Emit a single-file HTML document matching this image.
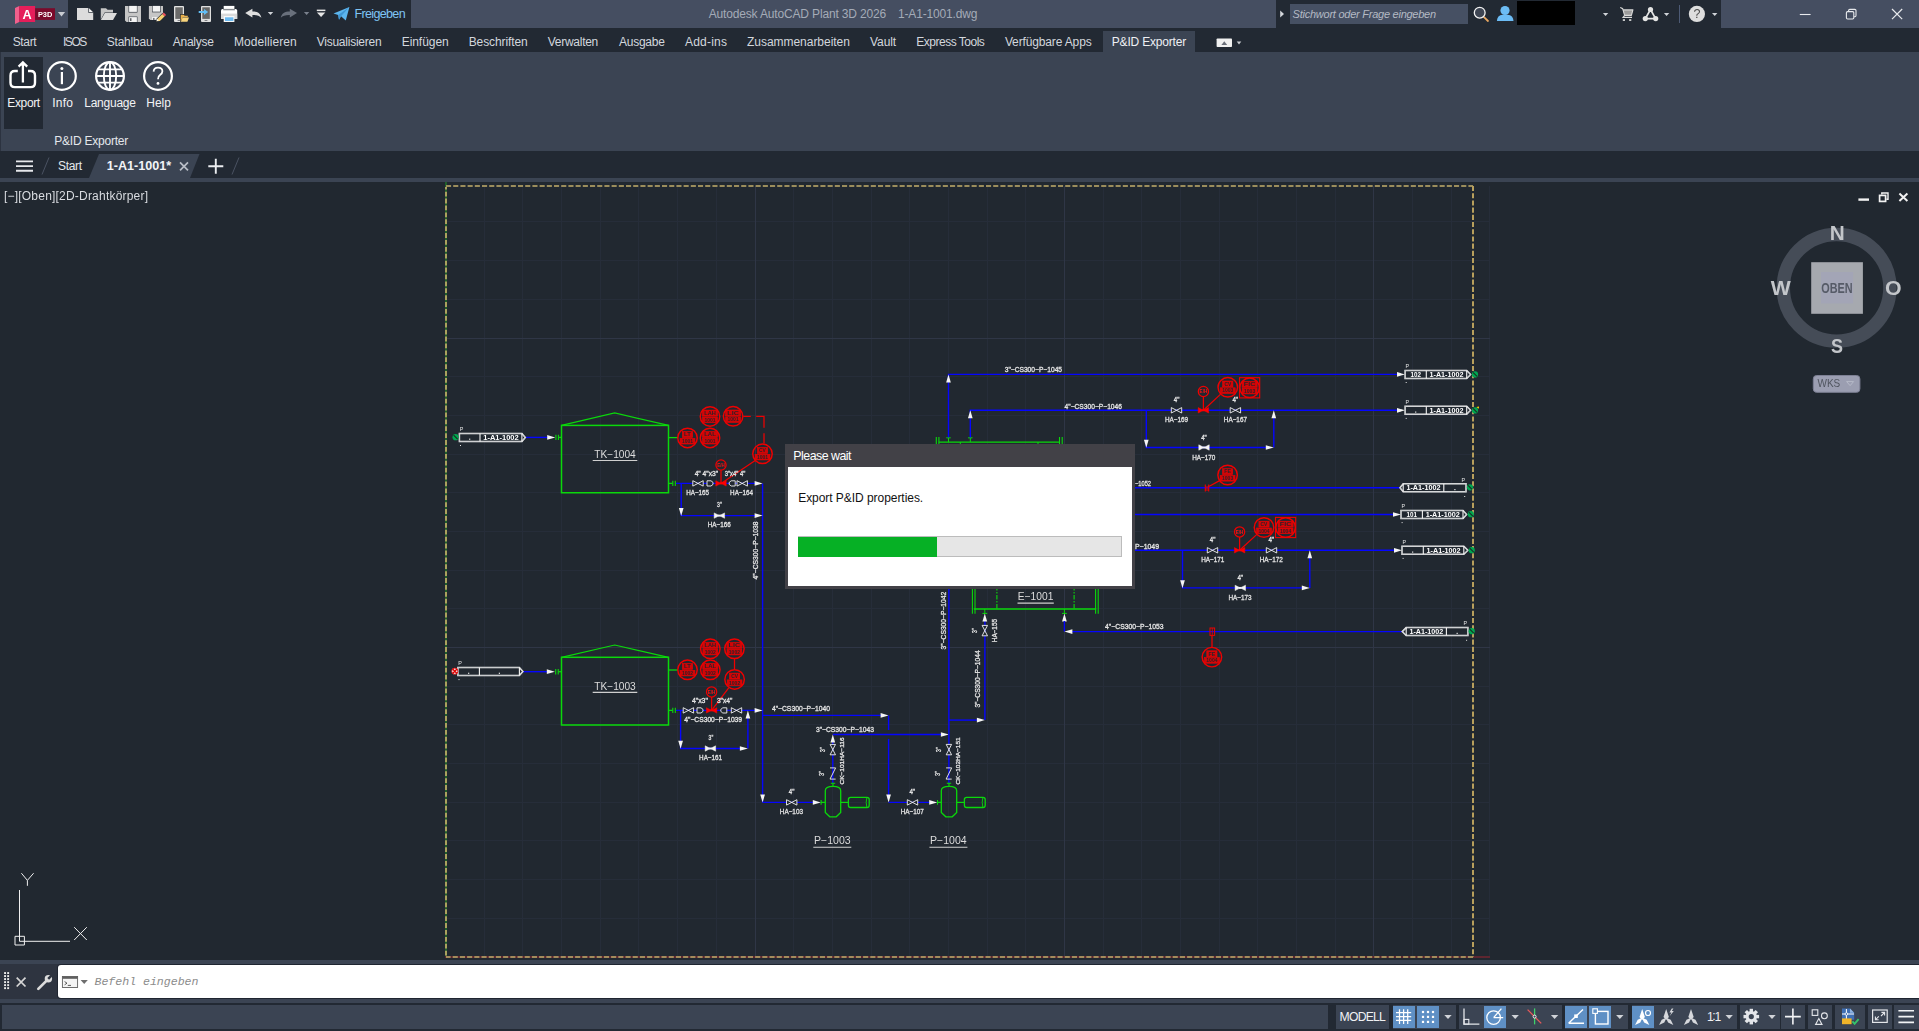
<!DOCTYPE html>
<html lang="de"><head><meta charset="utf-8"><title>Autodesk AutoCAD Plant 3D 2026 - 1-A1-1001.dwg</title>
<style>
html,body{margin:0;padding:0;background:#212830;overflow:hidden;}
body{width:1919px;height:1031px;position:relative;font-family:"Liberation Sans",sans-serif;}
.b{position:absolute;display:block;}
.t{position:absolute;white-space:pre;display:block;}
svg{overflow:visible;}
svg text{font-family:"Liberation Sans",sans-serif;}
</style></head>
<body>
<div class="b" style="left:0px;top:0px;width:1919px;height:28px;background:#454e61;"></div>
<div class="b" style="left:68px;top:0px;width:343px;height:28px;background:#222933;"></div>
<div class="b" style="left:1276px;top:0px;width:445px;height:28px;background:#222933;"></div>
<span class="t" style="left:708.70px;top:8.04px;font-size:12px;line-height:12px;color:#a4abb7;letter-spacing:-0.159px;">Autodesk AutoCAD Plant 3D 2026</span>
<span class="t" style="left:898.00px;top:8.04px;font-size:12px;line-height:12px;color:#a4abb7;letter-spacing:-0.158px;">1-A1-1001.dwg</span>
<span class="t" style="left:354.60px;top:7.82px;font-size:12.5px;line-height:12.5px;color:#7fc4f4;letter-spacing:-0.661px;">Freigeben</span>
<div class="b" style="left:1290px;top:4px;width:178px;height:20px;background:#465063;"></div>
<span class="t" style="left:1292.60px;top:8.69px;font-size:11px;line-height:11px;color:#b4bac4;font-style:italic;letter-spacing:-0.247px;">Stichwort oder Frage eingeben</span>
<div class="b" style="left:1516.5px;top:1px;width:58.5px;height:24px;background:#000;"></div>
<div class="b" style="left:1679px;top:5px;width:1px;height:18px;background:#4d5a75;"></div>
<div class="b" style="left:0px;top:28px;width:1919px;height:24px;background:#222933;"></div>
<div class="b" style="left:1102.7px;top:31px;width:92.6px;height:21px;background:#3b4453;"></div>
<span class="t" style="left:12.70px;top:36.04px;font-size:12px;line-height:12px;color:#d3d7dd;letter-spacing:-0.336px;">Start</span>
<span class="t" style="left:63.00px;top:36.04px;font-size:12px;line-height:12px;color:#d3d7dd;letter-spacing:-1.459px;">ISOS</span>
<span class="t" style="left:106.70px;top:36.04px;font-size:12px;line-height:12px;color:#d3d7dd;letter-spacing:-0.196px;">Stahlbau</span>
<span class="t" style="left:172.70px;top:36.04px;font-size:12px;line-height:12px;color:#d3d7dd;letter-spacing:-0.232px;">Analyse</span>
<span class="t" style="left:234.00px;top:36.04px;font-size:12px;line-height:12px;color:#d3d7dd;letter-spacing:0.066px;">Modellieren</span>
<span class="t" style="left:316.70px;top:36.04px;font-size:12px;line-height:12px;color:#d3d7dd;letter-spacing:-0.235px;">Visualisieren</span>
<span class="t" style="left:401.70px;top:36.04px;font-size:12px;line-height:12px;color:#d3d7dd;letter-spacing:-0.054px;">Einfügen</span>
<span class="t" style="left:468.70px;top:36.04px;font-size:12px;line-height:12px;color:#d3d7dd;letter-spacing:-0.103px;">Beschriften</span>
<span class="t" style="left:547.70px;top:36.04px;font-size:12px;line-height:12px;color:#d3d7dd;letter-spacing:-0.263px;">Verwalten</span>
<span class="t" style="left:619.00px;top:36.04px;font-size:12px;line-height:12px;color:#d3d7dd;letter-spacing:-0.246px;">Ausgabe</span>
<span class="t" style="left:685.00px;top:36.04px;font-size:12px;line-height:12px;color:#d3d7dd;letter-spacing:0.218px;">Add-ins</span>
<span class="t" style="left:747.00px;top:36.04px;font-size:12px;line-height:12px;color:#d3d7dd;letter-spacing:-0.032px;">Zusammenarbeiten</span>
<span class="t" style="left:870.00px;top:36.04px;font-size:12px;line-height:12px;color:#d3d7dd;letter-spacing:-0.065px;">Vault</span>
<span class="t" style="left:916.30px;top:36.04px;font-size:12px;line-height:12px;color:#d3d7dd;letter-spacing:-0.498px;">Express Tools</span>
<span class="t" style="left:1004.90px;top:36.04px;font-size:12px;line-height:12px;color:#d3d7dd;letter-spacing:-0.138px;">Verfügbare Apps</span>
<span class="t" style="left:1111.80px;top:36.04px;font-size:12px;line-height:12px;color:#eef0f3;letter-spacing:-0.191px;">P&amp;ID Exporter</span>
<div class="b" style="left:0px;top:52px;width:1919px;height:99px;background:#3b4453;"></div>
<div class="b" style="left:0px;top:52px;width:1px;height:99px;background:#2c3340;"></div>
<div class="b" style="left:4px;top:57px;width:39px;height:72px;background:#222933;"></div>
<span class="t" style="left:7.30px;top:97.14px;font-size:12px;line-height:12px;color:#f2f3f5;letter-spacing:-0.357px;">Export</span>
<span class="t" style="left:52.20px;top:97.14px;font-size:12px;line-height:12px;color:#f2f3f5;letter-spacing:0.261px;">Info</span>
<span class="t" style="left:84.20px;top:97.14px;font-size:12px;line-height:12px;color:#f2f3f5;letter-spacing:-0.228px;">Language</span>
<span class="t" style="left:146.20px;top:97.14px;font-size:12px;line-height:12px;color:#f2f3f5;letter-spacing:0.040px;">Help</span>
<span class="t" style="left:54.30px;top:135.14px;font-size:12px;line-height:12px;color:#e4e7eb;letter-spacing:-0.225px;">P&amp;ID Exporter</span>
<div class="b" style="left:0px;top:151px;width:1919px;height:27px;background:#222933;"></div>
<div class="b" style="left:0px;top:178px;width:1919px;height:4px;background:#3b4453;"></div>
<svg class="b" style="left:0;top:151px" width="260" height="27"><polygon points="89,27 99,3 199.5,3 190,27" fill="#3b4453"/><path d="M42,23.5 L49,6.5 M232,23.5 L239,6.5" stroke="#4a5262" stroke-width="1" fill="none"/><path d="M16,10.4h17 M16,15.1h17 M16,19.8h17" stroke="#e6e8ec" stroke-width="1.9"/><path d="M180,11.4l8,8 M188,11.4l-8,8" stroke="#b9bec7" stroke-width="1.7"/><path d="M208.3,15.2h15 M215.8,7.7v15" stroke="#eceef1" stroke-width="1.9"/></svg>
<span class="t" style="left:58.00px;top:159.54px;font-size:12px;line-height:12px;color:#e4e7eb;letter-spacing:-0.336px;">Start</span>
<span class="t" style="left:106.70px;top:160.33px;font-size:12.6px;line-height:12.6px;color:#f2f4f7;font-weight:bold;letter-spacing:0.006px;">1-A1-1001*</span>
<div class="b" style="left:0px;top:182px;width:1919px;height:778px;background:#212830;"></div>
<span class="t" style="left:3.50px;top:189.84px;font-size:12px;line-height:12px;color:#d9dce1;letter-spacing:0.206px;will-change:transform;">[−][Oben][2D-Drahtkörper]</span>
<div class="b" style="left:0px;top:960px;width:1919px;height:4px;background:#3b4453;"></div>
<div class="b" style="left:0px;top:964px;width:1919px;height:35px;background:#2e3440;"></div>
<div class="b" style="left:57px;top:964px;width:1862px;height:35px;background:#1f2530;border-radius:4px 0 0 4px;"></div>
<div class="b" style="left:58px;top:965px;width:1861px;height:33.2px;background:#fff;border-radius:3px 0 0 3px;"></div>
<div class="b" style="left:0px;top:999px;width:1919px;height:4px;background:#3b4453;"></div>
<span class="t" style="left:94.50px;top:976.01px;font-size:11.6px;line-height:11.6px;color:#8b8b8b;font-family:'Liberation Mono', monospace;font-style:italic;letter-spacing:-0.030px;">Befehl eingeben</span>
<div class="b" style="left:0px;top:1003px;width:1919px;height:28px;background:#222933;"></div>
<div class="b" style="left:2px;top:1005px;width:1326px;height:23.8px;background:#3b4453;"></div>
<div class="b" style="left:1335.6px;top:1005px;width:53.6px;height:23.8px;background:#3b4453;"></div>
<div class="b" style="left:1392.7px;top:1005px;width:63.3px;height:23.8px;background:#3b4453;"></div>
<div class="b" style="left:1458.8px;top:1005px;width:103.6px;height:23.8px;background:#3b4453;"></div>
<div class="b" style="left:1564.8px;top:1005px;width:63.1px;height:23.8px;background:#3b4453;"></div>
<div class="b" style="left:1631.6px;top:1005px;width:105.2px;height:23.8px;background:#3b4453;"></div>
<div class="b" style="left:1740.1px;top:1005px;width:39.8px;height:23.8px;background:#3b4453;"></div>
<div class="b" style="left:1781.2px;top:1005px;width:23.8px;height:23.8px;background:#3b4453;"></div>
<div class="b" style="left:1808.1px;top:1005px;width:23.8px;height:23.8px;background:#3b4453;"></div>
<div class="b" style="left:1834.9px;top:1005px;width:29.9px;height:23.8px;background:#3b4453;"></div>
<div class="b" style="left:1868.1px;top:1005px;width:23.6px;height:23.8px;background:#3b4453;"></div>
<div class="b" style="left:1894.2px;top:1005px;width:24.8px;height:23.8px;background:#3b4453;"></div>
<div class="b" style="left:1392.7px;top:1005.9px;width:22.1px;height:22.0px;background:#5f90c5;"></div>
<div class="b" style="left:1416.9px;top:1005.9px;width:22.1px;height:22.0px;background:#5f90c5;"></div>
<div class="b" style="left:1483.8px;top:1005.9px;width:22.2px;height:22.0px;background:#5f90c5;"></div>
<div class="b" style="left:1564.8px;top:1005.9px;width:22.2px;height:22.0px;background:#5f90c5;"></div>
<div class="b" style="left:1588.8px;top:1005.9px;width:22.2px;height:22.0px;background:#5f90c5;"></div>
<div class="b" style="left:1631.6px;top:1005.9px;width:22.4px;height:22.0px;background:#5f90c5;"></div>
<span class="t" style="left:1339.60px;top:1010.87px;font-size:12.2px;line-height:12.2px;color:#f0f1f3;letter-spacing:-0.794px;">MODELL</span>
<span class="t" style="left:1706.90px;top:1010.57px;font-size:12.2px;line-height:12.2px;color:#f0f1f3;">1</span>
<span class="t" style="left:1712.20px;top:1010.27px;font-size:12.2px;line-height:12.2px;color:#f0f1f3;">:</span>
<span class="t" style="left:1714.40px;top:1010.57px;font-size:12.2px;line-height:12.2px;color:#f0f1f3;">1</span>
<svg class="b" style="left:0;top:0" width="1919" height="1031" viewBox="0 0 1919 1031">
<path d="M1399.5,1009.2 V1024 M1403.6,1009.2 V1024 M1407.7,1009.2 V1024 M1396,1012.5 H1411.2 M1396,1016.5 H1411.2 M1396,1020.4 H1411.2" stroke="#ffffff" stroke-width="1.25" fill="none"/>
<rect x="1421.9" y="1010.9" width="2.2" height="2.2" fill="#ffffff"/><rect x="1421.9" y="1015.8" width="2.2" height="2.2" fill="#ffffff"/><rect x="1421.9" y="1020.8" width="2.2" height="2.2" fill="#ffffff"/><rect x="1426.9" y="1010.9" width="2.2" height="2.2" fill="#ffffff"/><rect x="1426.9" y="1015.8" width="2.2" height="2.2" fill="#ffffff"/><rect x="1426.9" y="1020.8" width="2.2" height="2.2" fill="#ffffff"/><rect x="1431.9" y="1010.9" width="2.2" height="2.2" fill="#ffffff"/><rect x="1431.9" y="1015.8" width="2.2" height="2.2" fill="#ffffff"/><rect x="1431.9" y="1020.8" width="2.2" height="2.2" fill="#ffffff"/>
<polygon points="1444.3,1015.05 1451.7,1015.05 1448,1018.95" fill="#d0d3d8"/>
<path d="M1464,1008.6 V1024.2 H1479.4" stroke="#e4e6ea" stroke-width="1.3" fill="none"/><rect x="1464" y="1019.4" width="4.8" height="4.8" fill="none" stroke="#e4e6ea" stroke-width="1.1"/>
<circle cx="1493.6" cy="1017.6" r="6.8" fill="none" stroke="#ffffff" stroke-width="1.3"/><path d="M1493.6,1017.6 H1503.2 M1493.6,1017.6 L1501.4,1008.6" stroke="#ffffff" stroke-width="1.3" fill="none"/>
<polygon points="1511.5,1015.05 1518.9,1015.05 1515.2,1018.95" fill="#d0d3d8"/>
<path d="M1534.6,1008.4 V1024.4" stroke="#3fd06a" stroke-width="1.3"/><path d="M1527.6,1009.6 L1541.2,1023.4" stroke="#e85a5a" stroke-width="1.3"/><circle cx="1534.6" cy="1016.6" r="1.5" fill="#3b4453" stroke="#ffffff" stroke-width="0.9"/>
<polygon points="1550.9,1015.05 1558.3,1015.05 1554.6,1018.95" fill="#d0d3d8"/>
<path d="M1568.6,1023.2 H1584 M1568.6,1023.2 L1583,1009.4" stroke="#ffffff" stroke-width="1.4" fill="none"/><rect x="1574.2" y="1014.4" width="3.6" height="3.6" fill="#ffffff"/>
<rect x="1595.4" y="1011.4" width="12.6" height="12.6" fill="none" stroke="#ffffff" stroke-width="1.4"/><rect x="1592.8" y="1008.8" width="4.6" height="4.6" fill="#5f90c5" stroke="#ffffff" stroke-width="1.1"/>
<polygon points="1616.1,1015.05 1623.5,1015.05 1619.8,1018.95" fill="#d0d3d8"/>
<polygon points="1642.2,1009 1644.9,1017 1642.2,1020 1639.5,1017" fill="#ffffff"/><polygon points="1642.6,1017.6 1640.3,1022.5 1635.1,1024.9 1637.7,1019.7" fill="#ffffff"/><polygon points="1641.8,1017.6 1644.1,1022.5 1649.3,1024.9 1646.7,1019.7" fill="#ffffff"/><circle cx="1648" cy="1013" r="2.5" fill="none" stroke="#ffffff" stroke-width="1.2"/>
<polygon points="1666.2,1009 1668.9,1017 1666.2,1020 1663.5,1017" fill="#d6d8dc"/><polygon points="1666.6,1017.6 1664.3,1022.5 1659.1,1024.9 1661.7,1019.7" fill="#d6d8dc"/><polygon points="1665.8,1017.6 1668.1,1022.5 1673.3,1024.9 1670.7,1019.7" fill="#d6d8dc"/><path d="M1671.8,1008.4 l-2.4,4 h2 l-1.6,3.6 l4,-5 h-2 l1.6,-2.6 z" fill="#d6d8dc"/>
<polygon points="1691,1009 1693.7,1017 1691,1020 1688.3,1017" fill="#d6d8dc"/><polygon points="1691.4,1017.6 1689.1,1022.5 1683.9,1024.9 1686.5,1019.7" fill="#d6d8dc"/><polygon points="1690.6,1017.6 1692.9,1022.5 1698.1,1024.9 1695.5,1019.7" fill="#d6d8dc"/>
<polygon points="1725.5,1015.05 1732.9,1015.05 1729.2,1018.95" fill="#d0d3d8"/>
<rect x="1749.6" y="1008.8" width="3.4" height="15.6" fill="#e4e6ea" transform="rotate(0 1751.3 1016.6)"/><rect x="1749.6" y="1008.8" width="3.4" height="15.6" fill="#e4e6ea" transform="rotate(45 1751.3 1016.6)"/><rect x="1749.6" y="1008.8" width="3.4" height="15.6" fill="#e4e6ea" transform="rotate(90 1751.3 1016.6)"/><rect x="1749.6" y="1008.8" width="3.4" height="15.6" fill="#e4e6ea" transform="rotate(135 1751.3 1016.6)"/><circle cx="1751.3" cy="1016.6" r="5.6" fill="#e4e6ea"/><circle cx="1751.3" cy="1016.6" r="2.6" fill="#3b4453"/>
<polygon points="1768.3,1015.05 1775.7,1015.05 1772,1018.95" fill="#d0d3d8"/>
<path d="M1785,1016.6 H1800.8 M1792.9,1008.6 V1024.6" stroke="#f2f3f5" stroke-width="1.6"/>
<rect x="1812.2" y="1009.8" width="5.6" height="5.6" fill="none" stroke="#e4e6ea" stroke-width="1.1"/><circle cx="1824.4" cy="1015.8" r="2.9" fill="none" stroke="#e4e6ea" stroke-width="1.1"/><path d="M1818.8,1018.6 l3.2,5.8 h-6.4 z" fill="none" stroke="#e4e6ea" stroke-width="1.1"/>
<path d="M1842,1008.6 h8 l4.2,4.2 v7 h-12.2 z" fill="#3f6fb4"/><path d="M1850,1008.6 v4.2 h4.2 z" fill="#8fb3e2"/><path d="M1842,1014 H1854 M1846.4,1009 V1019" stroke="#ffffff" stroke-width="1"/><circle cx="1846.4" cy="1014" r="1.3" fill="#3f6fb4" stroke="#fff" stroke-width="0.8"/><rect x="1842" y="1018.4" width="9.6" height="5.8" fill="#f0b429"/><path d="M1852.4,1021.4 l2.2,2.4 l4,-4.6" stroke="#35c36b" stroke-width="1.9" fill="none"/>
<rect x="1872.6" y="1010" width="14.6" height="12.4" fill="none" stroke="#e4e6ea" stroke-width="1.2"/><path d="M1875.6,1019.6 L1878.8,1016.4 M1875.4,1016.6 V1019.8 H1878.6 M1881,1016 L1884.4,1012.6 M1881.4,1012.4 H1884.6 V1015.6" stroke="#e4e6ea" stroke-width="1.1" fill="none"/>
<path d="M1898.4,1010.8 H1914 M1898.4,1016.6 H1914 M1898.4,1022.4 H1914" stroke="#f2f3f5" stroke-width="1.6"/>
</svg>
<svg class="b" style="left:0;top:0;will-change:transform" width="1919" height="1031" viewBox="0 0 1919 1031">
<polygon points="15,8 19.3,6.1 19.3,22 15,23.9" fill="#f0608c"/>
<rect x="19.2" y="6" width="15.9" height="16" fill="#e51e5a"/>
<rect x="35.1" y="8.2" width="19.9" height="11.7" fill="#7a0a2b"/>
<text x="27.10" y="18.60" font-size="13.2" fill="#ffffff" text-anchor="middle" textLength="9.20" lengthAdjust="spacingAndGlyphs" font-weight="bold">A</text>
<text x="45.10" y="16.90" font-size="7.8" fill="#ffffff" text-anchor="middle" textLength="14.40" lengthAdjust="spacingAndGlyphs" font-weight="bold">P3D</text>
<polygon points="57.9,11.9 65.1,11.9 61.5,16.5" fill="#c9ccd2"/>
<path d="M77,7.9 H88.6 L93.2,12.5 V19.9 H77 Z" fill="#dcdcdc"/><path d="M88.6,7.9 V12.5 H93.2 Z" fill="#f7f7f7"/><path d="M88.6,7.9 V12.5 H93.2" fill="none" stroke="#222933" stroke-width="0.7"/>
<path d="M100.8,19.6 V8.2 H106 L107.6,9.8 H113 V12.4 H104.6 L100.8,19.6 Z" fill="#c6c6c6"/><path d="M104.8,12.9 H117 L113,20 H100.9 Z" fill="#dcdcdc"/>
<path d="M125,5.9 H141 V22 H126.6 L125,20.4 Z" fill="#c6c6c6"/><rect x="128.6" y="5.9" width="8.8" height="6.6" fill="#222933"/><rect x="129.1" y="5.9" width="7.8" height="6" fill="#f4f4f4"/><rect x="128.6" y="16.6" width="8.8" height="5.4" fill="#222933"/><rect x="129.1" y="17.1" width="7.8" height="4.9" fill="#f4f4f4"/><rect x="130.2" y="18.2" width="1.2" height="2.8" fill="#3a3d44"/>
<path d="M148.9,5.9 H163 V14 L157,20 H150.3 L148.9,18.6 Z" fill="#c6c6c6"/><rect x="152.1" y="5.9" width="8.6" height="6.4" fill="#222933"/><rect x="152.6" y="5.9" width="7.6" height="5.8" fill="#f4f4f4"/><path d="M152.2,20 V17 H157.4 L154.8,20 Z" fill="#f4f4f4"/><rect x="153.3" y="17.9" width="1.1" height="2.1" fill="#3a3d44"/>
<path d="M156.2,21.6 L157,18.4 L162.4,13 L165.4,16 L160,21.4 Z" fill="#222933"/><path d="M156.5,21.3 L157.5,18.7 L162.3,13.9 L164.7,16.3 L159.9,21.1 Z" fill="#f6d070"/><path d="M162.3,13.9 L163.7,12.5 L166.1,14.9 L164.7,16.3 Z" fill="#f2535f"/><path d="M156.5,21.3 L157.3,19 L158.9,20.6 Z" fill="#fafafa"/>
<rect x="174" y="6" width="10" height="16" rx="1" fill="#e2e2e2"/><rect x="175.3" y="7.3" width="7.5" height="11.6" fill="#6b6b6b"/><rect x="177.6" y="20.1" width="2.8" height="0.9" fill="#77797d"/>
<path d="M180.1,22.4 V14.1 H184 L185,15.1 H188.4 V17 H189.6 L187.8,22.4 Z" fill="#222933"/><path d="M180.7,21.8 V14.8 H183.7 L184.7,15.8 H187.8 V17.2 H182.8 Z" fill="#e8b04c"/><path d="M182.6,17.5 H189 L187.4,21.8 H180.8 Z" fill="#f8d47c"/>
<rect x="201" y="6" width="10" height="16" rx="1" fill="#dedede"/><rect x="202.3" y="7.3" width="7.5" height="11.6" fill="#666666"/><rect x="204.6" y="20.1" width="2.8" height="0.9" fill="#77797d"/>
<path d="M198.7,11 H204 V8.9 L208.2,12 L204,15.1 V13 H198.7 Z" fill="#62bdf3"/>
<rect x="223.7" y="5.9" width="10.7" height="4.4" fill="#ffffff"/><path d="M221,10.4 Q221,8.9 222.5,8.9 H235.7 Q237.2,8.9 237.2,10.4 V18.9 H221 Z" fill="#ffffff"/><rect x="221" y="13.6" width="16.2" height="5.3" fill="#dadada"/><rect x="223.2" y="8.9" width="11.7" height="1.4" fill="#222933" fill-opacity="0.55"/><rect x="223.7" y="16" width="10.7" height="6" fill="#f7f7f7"/><rect x="225" y="17.3" width="8.4" height="3.7" fill="#6dbaf0"/>
<path d="M245.2,13 L252.4,8.8 V11.4 C257.4,11.4 260.6,13.2 261.4,17.8 C259.6,15.6 256.6,14.8 252.4,14.9 V17.4 Z" fill="#dedede"/>
<polygon points="267.8,11.9 273.2,11.9 270.5,15.1" fill="#d0d3d8"/>
<path d="M297,13 L289.8,8.8 V11.4 C284.8,11.4 281.6,13.2 280.8,17.8 C282.6,15.6 285.6,14.8 289.8,14.9 V17.4 Z" fill="#69707c"/>
<polygon points="303.9,11.9 309.3,11.9 306.6,15.1" fill="#7a818d"/>
<rect x="316.8" y="9.6" width="8.6" height="1.5" fill="#e6e6e6"/><polygon points="316.9,12.6 325.3,12.6 321.1,17" fill="#e6e6e6"/>
<path d="M333.5,13.6 L349.4,7 L345.8,20.6 L341,16.2 L339,19.8 L338.2,15 Z" fill="#5cb5ee"/><path d="M338.2,15 L349.4,7 L341,16.2 L339,19.8 Z" fill="#3f96d4"/>
<polygon points="1280.2,10.6 1280.2,17.4 1284,14" fill="#d5d8dd"/>
<path d="M1483.7,16.9 L1488,21" stroke="#e9a761" stroke-width="1.8" stroke-linecap="round"/><circle cx="1479.7" cy="12.7" r="5.4" fill="#3e4553" stroke="#f2f2f2" stroke-width="1.3"/>
<circle cx="1505" cy="10.5" r="4.6" fill="#6cbcf5"/><path d="M1496.9,21 Q1497.2,15.2 1502.6,14.8 H1507.6 Q1513.2,15.2 1513.5,21 Z" fill="#6cbcf5"/>
<polygon points="1602.9,12.95 1608.3,12.95 1605.6,16.05" fill="#d0d3d8"/>
<path d="M1620.2,7.4 L1622.6,8.4 L1624.6,15.4 H1631.4 L1632.9,9.9 H1623.2" fill="#9c9c9c" stroke="#dadada" stroke-width="1.1" stroke-linejoin="round"/><path d="M1624.6,15.4 L1623,17.4 H1632" stroke="#dadada" stroke-width="1.1" fill="none"/><rect x="1622.8" y="19.2" width="2.2" height="1.7" fill="#dadada"/><rect x="1629.1" y="19.2" width="2.2" height="1.7" fill="#dadada"/>
<path d="M1650.5,9.5 L1645.3,18.6 H1655.6 Z" fill="none" stroke="#e4e4e4" stroke-width="1.7" stroke-linejoin="round"/><circle cx="1650.5" cy="9.5" r="2.6" fill="#e4e4e4"/><circle cx="1645.3" cy="18.6" r="2.6" fill="#e4e4e4"/><circle cx="1655.7" cy="18.6" r="2.6" fill="#e4e4e4"/>
<polygon points="1663.9,12.95 1669.3,12.95 1666.6,16.05" fill="#d0d3d8"/>
<circle cx="1696.9" cy="13.9" r="8.1" fill="#dedede"/><text x="1696.90" y="18.40" font-size="12.6" fill="#4d4d4d" text-anchor="middle">?</text>
<polygon points="1712,12.95 1717.4,12.95 1714.7,16.05" fill="#d0d3d8"/>
<path d="M1799.8,14.5 H1810.6" stroke="#e8eaed" stroke-width="1.1"/>
<rect x="1846.4" y="11.6" width="7.4" height="7.4" rx="1.2" fill="none" stroke="#e8eaed" stroke-width="1.1"/><path d="M1848.6,11.4 V10.6 Q1848.6,9.4 1849.8,9.4 H1854.8 Q1856,9.4 1856,10.6 V15.6 Q1856,16.8 1854.8,16.8 H1854" fill="none" stroke="#e8eaed" stroke-width="1.1"/>
<path d="M1892,9 L1902.2,19.2 M1902.2,9 L1892,19.2" stroke="#e8eaed" stroke-width="1.2"/>
<rect x="1216.6" y="38.4" width="15.4" height="8.6" rx="0.8" fill="#f0f0f0"/><polygon points="1221.4,45 1227.2,45 1224.3,41.2" fill="#6a6f79"/><polygon points="1236.7,41.6 1241.3,41.6 1239,44.4" fill="#c9ccd2"/>
<path d="M17.8,71 H14.9 Q10.5,71 10.5,75.4 V82.7 Q10.5,87.1 14.9,87.1 H30.6 Q35,87.1 35,82.7 V75.4 Q35,71 30.6,71 H28" fill="none" stroke="#ffffff" stroke-width="2.4"/><path d="M22.9,82.6 V64 M18.6,66.6 L22.9,62.3 L27.2,66.6" fill="none" stroke="#ffffff" stroke-width="2.3" stroke-linejoin="miter"/><path d="M20.4,65.4 L22.9,62.9 L25.4,65.4 Z" fill="#ffffff"/>
<circle cx="61.9" cy="76" r="13.9" fill="none" stroke="#ffffff" stroke-width="2.2"/><path d="M61.9,72 V84.2" stroke="#ffffff" stroke-width="2.2"/><circle cx="61.9" cy="68.4" r="1.5" fill="#ffffff"/>
<circle cx="110" cy="76" r="13.9" fill="none" stroke="#ffffff" stroke-width="2.2"/><path d="M110,62 V90 M96,76 H124 M98,69.4 H122 M98,82.6 H122" stroke="#ffffff" stroke-width="1.9" fill="none"/><ellipse cx="110" cy="76" rx="6.2" ry="13.9" fill="none" stroke="#ffffff" stroke-width="1.9"/>
<circle cx="158" cy="76" r="13.9" fill="none" stroke="#ffffff" stroke-width="2.2"/><path d="M153.6,71.6 Q153.8,67.6 158,67.6 Q162.4,67.6 162.4,71.2 Q162.4,73.4 160,75 Q158,76.4 158,79.2" fill="none" stroke="#ffffff" stroke-width="1.8"/><circle cx="158" cy="83.4" r="1.4" fill="#ffffff"/>
<path d="M1858.4,199.6 H1869" stroke="#f2f2f2" stroke-width="2.4"/>
<rect x="1879.6" y="195.4" width="6" height="6" fill="none" stroke="#f2f2f2" stroke-width="1.7"/><path d="M1881.8,194.6 V193 H1888 V199.2 H1886.4" fill="none" stroke="#f2f2f2" stroke-width="1.4"/>
<path d="M1899.4,193.6 L1907.4,201 M1907.4,193.6 L1899.4,201" stroke="#f2f2f2" stroke-width="2"/>
<circle cx="1836.6" cy="287.8" r="53.3" fill="none" stroke="#454c57" stroke-width="13.4"/>
<text x="1837.30" y="239.60" font-size="20" fill="#c3c6ca" text-anchor="middle" textLength="15.00" lengthAdjust="spacingAndGlyphs" font-weight="bold">N</text>
<text x="1837.00" y="352.90" font-size="20" fill="#c3c6ca" text-anchor="middle" textLength="12.00" lengthAdjust="spacingAndGlyphs" font-weight="bold">S</text>
<text x="1780.70" y="295.40" font-size="20" fill="#c3c6ca" text-anchor="middle" textLength="20.00" lengthAdjust="spacingAndGlyphs" font-weight="bold">W</text>
<text x="1893.20" y="295.40" font-size="20" fill="#c3c6ca" text-anchor="middle" textLength="16.60" lengthAdjust="spacingAndGlyphs" font-weight="bold">O</text>
<rect x="1811.2" y="262.2" width="51.7" height="51.6" fill="#a6a9af"/><rect x="1821" y="272" width="32.1" height="31.4" fill="#a3a5b6"/>
<text x="1837.00" y="293.40" font-size="14.8" fill="#565b67" text-anchor="middle" textLength="31.40" lengthAdjust="spacingAndGlyphs" font-weight="bold">OBEN</text>
<rect x="1813.3" y="375.5" width="46.6" height="16.8" rx="3.4" fill="#9b9eb1" stroke="#7d8094" stroke-width="1"/>
<text x="1817.50" y="387.20" font-size="11.2" fill="#50555f" textLength="22.80" lengthAdjust="spacingAndGlyphs">WKS</text>
<path d="M1846.6,381.6 H1853.6 L1850.1,385.6 Z" fill="none" stroke="#b9bccb" stroke-width="0.9"/>
<path d="M19.5,890 V941.3 H70 M15,936.3 H24.4 V945 H15 Z M21.4,873.2 L27.4,880.4 L33.6,873.2 M27.4,880.4 V885.8 M74.2,927.2 L86.8,940 M86.8,927.2 L74.2,940" fill="none" stroke="#f0f0f0" stroke-width="1"/>
<rect x="4.1" y="972.1" width="1.9" height="1.9" fill="#ececec"/><rect x="4.1" y="975.12" width="1.9" height="1.9" fill="#ececec"/><rect x="4.1" y="978.14" width="1.9" height="1.9" fill="#ececec"/><rect x="4.1" y="981.16" width="1.9" height="1.9" fill="#ececec"/><rect x="4.1" y="984.18" width="1.9" height="1.9" fill="#ececec"/><rect x="4.1" y="987.2" width="1.9" height="1.9" fill="#ececec"/><rect x="7.2" y="972.1" width="1.9" height="1.9" fill="#ececec"/><rect x="7.2" y="975.12" width="1.9" height="1.9" fill="#ececec"/><rect x="7.2" y="978.14" width="1.9" height="1.9" fill="#ececec"/><rect x="7.2" y="981.16" width="1.9" height="1.9" fill="#ececec"/><rect x="7.2" y="984.18" width="1.9" height="1.9" fill="#ececec"/><rect x="7.2" y="987.2" width="1.9" height="1.9" fill="#ececec"/>
<path d="M16.7,977.6 L25.5,986.5 M25.5,977.6 L16.7,986.5" stroke="#d6d6d6" stroke-width="1.7"/>
<path d="M38.3,988.9 L46.6,980.6" stroke="#dcdcdc" stroke-width="2.7" stroke-linecap="round"/><circle cx="48.4" cy="978.7" r="3.7" fill="#dcdcdc"/><path d="M48.2,978.9 L51.4,975.7" stroke="#2e3440" stroke-width="2.5"/>
<rect x="62.4" y="976.5" width="15.2" height="11" fill="#f4f4f4" stroke="#5f5f5f" stroke-width="0.9"/><rect x="62.4" y="976.5" width="15.2" height="2.3" fill="#5f5f5f"/><path d="M64.6,981.6 L67,983.2 L64.6,984.8 M67.8,985.4 H71" stroke="#333" stroke-width="0.8" fill="none"/>
<polygon points="80.6,980.1 87.8,980.1 84.2,983.9" fill="#6e6e6e"/>
</svg>
<svg class="b" style="left:0;top:0;will-change:transform" width="1919" height="1031" viewBox="0 0 1919 1031" shape-rendering="geometricPrecision">
<path d="M484.5,186 V957 M522.5,186 V957 M561.5,186 V957 M600.5,186 V957 M638.5,186 V957 M677.5,186 V957 M716.5,186 V957 M793.5,186 V957 M832.5,186 V957 M871.5,186 V957 M909.5,186 V957 M948.5,186 V957 M987.5,186 V957 M1025.5,186 V957 M1103.5,186 V957 M1141.5,186 V957 M1180.5,186 V957 M1219.5,186 V957 M1257.5,186 V957 M1296.5,186 V957 M1335.5,186 V957 M1412.5,186 V957 M1451.5,186 V957 M1489.5,186 V957 M446,221.5 H1490 M446,260.5 H1490 M446,299.5 H1490 M446,376.5 H1490 M446,415.5 H1490 M446,454.5 H1490 M446,492.5 H1490 M446,531.5 H1490 M446,570.5 H1490 M446,608.5 H1490 M446,686.5 H1490 M446,724.5 H1490 M446,763.5 H1490 M446,802.5 H1490 M446,840.5 H1490 M446,879.5 H1490 M446,918.5 H1490" stroke="#262d39" stroke-width="1" fill="none"/><path d="M445.5,186 V957 M755.5,186 V957 M1064.5,186 V957 M1373.5,186 V957 M446,338.5 H1490 M446,647.5 H1490" stroke="#2f3646" stroke-width="1" fill="none"/><path d="M446,182 V958" stroke="#1f5f2b" stroke-width="2"/><path d="M445,957 H1490" stroke="#5e2630" stroke-width="2"/><path d="M446,186 H1473" fill="none" stroke="#9b8d5c" stroke-width="2" stroke-dasharray="5.1 2.1"/><path d="M1473,186 V957" fill="none" stroke="#b89f5c" stroke-width="2" stroke-dasharray="5.1 2.1"/><path d="M1473,957 H446" fill="none" stroke="#a48c5c" stroke-width="2" stroke-dasharray="5.1 2.1"/><path d="M446,187 V957" fill="none" stroke="#aba25e" stroke-width="2" stroke-dasharray="4.8 2.1" stroke-dashoffset="2.2"/>
<polyline points="525.3,437.4 548,437.4" fill="none" stroke="#0505ff" stroke-width="1.4" />
<polygon points="555.2,437.4 547.2,435.05 547.2,439.75" fill="#f4f4f4"/>
<polygon points="459.4,433.4 521.9,433.4 525.3,437.4 521.9,441.4 459.4,441.4" fill="#212830" stroke="#f4f4f4" stroke-width="1.5" stroke-linejoin="miter"/><polygon points="459.4,433.4 521.9,433.4 525.3,437.4 521.9,441.4 459.4,441.4" fill="none" stroke="#8a8f96" stroke-width="0.4"/><path d="M480,433.4 V441.4 M521.9,433.4 V441.4" stroke="#f4f4f4" stroke-width="1.1"/><rect x="469.1" y="438.6" width="1.2" height="1.2" fill="#e6e6e6"/><text x="500.95" y="439.80" font-size="6.4" fill="#ffffff" text-anchor="middle" textLength="35.40" lengthAdjust="spacingAndGlyphs" font-weight="bold">1-A1-1002</text><text x="459.80" y="431.20" font-size="5.6" fill="#e6e6e6" textLength="3.60" lengthAdjust="spacingAndGlyphs">P</text><rect x="460" y="445" width="1" height="1" fill="#e6e6e6"/>
<circle cx="455.6" cy="437.2" r="3.1" fill="#00a650"/><path d="M453.6,435.2 L457.6,439.2" stroke="#1b2a22" stroke-width="1.1"/>
<polyline points="561.5,437.4 558.4,437.4" fill="none" stroke="#0bd80b" stroke-width="1.3" /><path d="M555.9,434.7 V440.1 M558.4,434.7 V440.1" stroke="#0bd80b" stroke-width="1.1"/>
<rect x="561.5" y="425.4" width="107" height="67.35" fill="none" stroke="#0bd80b" stroke-width="1.5"/><polyline points="561.5,425.4 614.7,412.9 668.5,425.4" fill="none" stroke="#0bd80b" stroke-width="1.2" /><text x="615.00" y="457.75" font-size="10.2" fill="#dcdcdc" text-anchor="middle" textLength="41.50" lengthAdjust="spacingAndGlyphs">TK−1004</text><path d="M592.7,460.45 H637.3" stroke="#cfcfcf" stroke-width="1.15"/>
<polyline points="668.5,437.6 678,437.6" fill="none" stroke="#0bd80b" stroke-width="1.3" />
<circle cx="710" cy="416.4" r="9.75" fill="none" stroke="#f00000" stroke-width="1.45"/><rect x="702.5" y="410.1" width="15" height="5.9" fill="#f00000" fill-opacity="0.86" stroke="#f00000" stroke-width="0.6"/><rect x="702.6" y="416.9" width="14.8" height="5.6" fill="#f00000" fill-opacity="0.86" stroke="#f00000" stroke-width="0.6"/><text x="710.00" y="414.80" font-size="5.4" fill="#1c222a" text-anchor="middle" textLength="11.60" lengthAdjust="spacingAndGlyphs" font-weight="bold" fill-opacity="0.9">LAH</text><text x="710.00" y="421.50" font-size="5.4" fill="#1c222a" text-anchor="middle" textLength="11.20" lengthAdjust="spacingAndGlyphs" font-weight="bold" fill-opacity="0.9">1001</text>
<circle cx="733.1" cy="416.3" r="9.75" fill="none" stroke="#f00000" stroke-width="1.45"/><rect x="725.6" y="410" width="15" height="5.9" fill="#f00000" fill-opacity="0.86" stroke="#f00000" stroke-width="0.6"/><rect x="725.7" y="416.8" width="14.8" height="5.6" fill="#f00000" fill-opacity="0.86" stroke="#f00000" stroke-width="0.6"/><text x="733.10" y="414.70" font-size="5.4" fill="#1c222a" text-anchor="middle" textLength="11.60" lengthAdjust="spacingAndGlyphs" font-weight="bold" fill-opacity="0.9">LIC</text><text x="733.10" y="421.40" font-size="5.4" fill="#1c222a" text-anchor="middle" textLength="11.20" lengthAdjust="spacingAndGlyphs" font-weight="bold" fill-opacity="0.9">1001</text>
<circle cx="687.5" cy="437.9" r="9.75" fill="none" stroke="#f00000" stroke-width="1.45"/><rect x="682.4" y="431.6" width="10.2" height="5.9" fill="#f00000" fill-opacity="0.86" stroke="#f00000" stroke-width="0.6"/><rect x="680.1" y="438.4" width="14.8" height="5.6" fill="#f00000" fill-opacity="0.86" stroke="#f00000" stroke-width="0.6"/><text x="687.50" y="436.30" font-size="5.4" fill="#1c222a" text-anchor="middle" textLength="6.80" lengthAdjust="spacingAndGlyphs" font-weight="bold" fill-opacity="0.9">LT</text><text x="687.50" y="443.00" font-size="5.4" fill="#1c222a" text-anchor="middle" textLength="11.20" lengthAdjust="spacingAndGlyphs" font-weight="bold" fill-opacity="0.9">1001</text>
<circle cx="710" cy="437.9" r="9.75" fill="none" stroke="#f00000" stroke-width="1.45"/><rect x="702.5" y="431.6" width="15" height="5.9" fill="#f00000" fill-opacity="0.86" stroke="#f00000" stroke-width="0.6"/><rect x="702.6" y="438.4" width="14.8" height="5.6" fill="#f00000" fill-opacity="0.86" stroke="#f00000" stroke-width="0.6"/><text x="710.00" y="436.30" font-size="5.4" fill="#1c222a" text-anchor="middle" textLength="11.60" lengthAdjust="spacingAndGlyphs" font-weight="bold" fill-opacity="0.9">LAL</text><text x="710.00" y="443.00" font-size="5.4" fill="#1c222a" text-anchor="middle" textLength="11.20" lengthAdjust="spacingAndGlyphs" font-weight="bold" fill-opacity="0.9">1001</text>
<circle cx="762.5" cy="453.8" r="9.75" fill="none" stroke="#f00000" stroke-width="1.45"/><rect x="757.4" y="447.5" width="10.2" height="5.9" fill="#f00000" fill-opacity="0.86" stroke="#f00000" stroke-width="0.6"/><rect x="755.1" y="454.3" width="14.8" height="5.6" fill="#f00000" fill-opacity="0.86" stroke="#f00000" stroke-width="0.6"/><text x="762.50" y="452.20" font-size="5.4" fill="#1c222a" text-anchor="middle" textLength="6.80" lengthAdjust="spacingAndGlyphs" font-weight="bold" fill-opacity="0.9">CV</text><text x="762.50" y="458.90" font-size="5.4" fill="#1c222a" text-anchor="middle" textLength="11.20" lengthAdjust="spacingAndGlyphs" font-weight="bold" fill-opacity="0.9">1001</text>
<polyline points="743.3,416.4 750.8,416.4" fill="none" stroke="#f00000" stroke-width="1.25" /><polyline points="756.2,416.4 764,416.4 764,427.8" fill="none" stroke="#f00000" stroke-width="1.25" /><polyline points="764,433.2 764,443.6" fill="none" stroke="#f00000" stroke-width="1.25" />
<polyline points="668.5,483.4 672.8,483.4" fill="none" stroke="#0bd80b" stroke-width="1.3" /><path d="M675.3,480.7 V486.1 M672.8,480.7 V486.1" stroke="#0bd80b" stroke-width="1.1"/>
<polyline points="676,483.4 755,483.4" fill="none" stroke="#0505ff" stroke-width="1.4" />
<polyline points="681.2,483.4 681.2,515.6 755,515.6" fill="none" stroke="#0505ff" stroke-width="1.4" />
<polyline points="762.6,483.4 762.6,802.4" fill="none" stroke="#0505ff" stroke-width="1.4" />
<polygon points="762.6,483.4 754.6,481.05 754.6,485.75" fill="#f4f4f4"/>
<polygon points="762.6,515.6 754.6,513.25 754.6,517.95" fill="#f4f4f4"/>
<polygon points="681.2,516 678.85,508 683.55,508" fill="#f4f4f4"/>
<polygon points="692.8,480.7 703.2,486.1 703.2,480.7 692.8,486.1" fill="#212830" stroke="#f4f4f4" stroke-width="0.9" stroke-linejoin="miter"/>
<path d="M707,480.8 L711,480.8 L713,482.4 L713,484.4 L711,486 L707,486 Z" fill="#212830" stroke="#f4f4f4" stroke-width="0.9"/>
<polyline points="721,470.2 721,483.4" fill="none" stroke="#f00000" stroke-width="1.25" /><polyline points="755.2,460.6 721,483.4" fill="none" stroke="#f00000" stroke-width="1.25" />
<polygon points="715.8,480.7 726.2,486.1 726.2,480.7 715.8,486.1" fill="#ff0000" stroke="#ff0000" stroke-width="0.5"/><rect x="719.7" y="482.45" width="2.6" height="1.9" fill="#ff0000"/>
<circle cx="721" cy="465" r="5.1" fill="none" stroke="#f00000" stroke-width="1.25"/><text x="721.00" y="466.80" font-size="4.8" fill="#ff1414" text-anchor="middle" textLength="7.60" lengthAdjust="spacingAndGlyphs" font-weight="bold">E/H</text>
<path d="M735.2,480.8 L731.2,480.8 L729.2,482.4 L729.2,484.4 L731.2,486 L735.2,486 Z" fill="#212830" stroke="#f4f4f4" stroke-width="0.9"/>
<polygon points="737,480.7 747.4,486.1 747.4,480.7 737,486.1" fill="#212830" stroke="#f4f4f4" stroke-width="0.9" stroke-linejoin="miter"/>
<polygon points="714.2,512.9 724.6,518.3 724.6,512.9 714.2,518.3" fill="#f4f4f4" stroke="#f4f4f4" stroke-width="0.5"/><rect x="718.1" y="514.65" width="2.6" height="1.9" fill="#f4f4f4"/>
<text x="706.40" y="475.58" font-size="6.6" fill="#e6e6e6" text-anchor="middle" textLength="23.50" lengthAdjust="spacingAndGlyphs" stroke="#e6e6e6" stroke-width="0.28">4" 4"x3"</text>
<text x="735.00" y="475.58" font-size="6.6" fill="#e6e6e6" text-anchor="middle" textLength="20.50" lengthAdjust="spacingAndGlyphs" stroke="#e6e6e6" stroke-width="0.28">3"x4" 4"</text>
<text x="697.60" y="495.16" font-size="7.4" fill="#e6e6e6" text-anchor="middle" textLength="22.80" lengthAdjust="spacingAndGlyphs" stroke="#e6e6e6" stroke-width="0.28">HA−165</text>
<text x="741.60" y="495.16" font-size="7.4" fill="#e6e6e6" text-anchor="middle" textLength="23.00" lengthAdjust="spacingAndGlyphs" stroke="#e6e6e6" stroke-width="0.28">HA−164</text>
<text x="719.40" y="507.38" font-size="6.6" fill="#e6e6e6" text-anchor="middle" textLength="4.60" lengthAdjust="spacingAndGlyphs" stroke="#e6e6e6" stroke-width="0.28">3"</text>
<text x="719.30" y="527.26" font-size="7.4" fill="#e6e6e6" text-anchor="middle" textLength="23.00" lengthAdjust="spacingAndGlyphs" stroke="#e6e6e6" stroke-width="0.28">HA−166</text>
<text x="0" y="2.52" font-size="7.0" fill="#e6e6e6" text-anchor="middle" textLength="58" lengthAdjust="spacingAndGlyphs" stroke="#e6e6e6" stroke-width="0.28" transform="translate(755.8 550.4) rotate(-90)">4"−CS300−P−1038</text>
<polyline points="523,671.7 548,671.7" fill="none" stroke="#0505ff" stroke-width="1.4" />
<polygon points="554.8,671.7 546.8,669.35 546.8,674.05" fill="#f4f4f4"/>
<polygon points="457.9,667.5 519.4,667.5 522.9,671.5 519.4,675.5 457.9,675.5" fill="#212830" stroke="#f4f4f4" stroke-width="1.5" stroke-linejoin="miter"/><polygon points="457.9,667.5 519.4,667.5 522.9,671.5 519.4,675.5 457.9,675.5" fill="none" stroke="#8a8f96" stroke-width="0.4"/><path d="M479.4,667.5 V675.5 M519.4,667.5 V675.5" stroke="#f4f4f4" stroke-width="1.1"/><rect x="468.05" y="672.7" width="1.2" height="1.2" fill="#e6e6e6"/><rect x="498.8" y="672.7" width="1.2" height="1.2" fill="#e6e6e6"/><text x="458.30" y="665.30" font-size="5.6" fill="#e6e6e6" textLength="3.60" lengthAdjust="spacingAndGlyphs">P</text><rect x="458.5" y="679.1" width="1" height="1" fill="#e6e6e6"/>
<circle cx="454.8" cy="671.2" r="3.1" fill="#f2f2f2"/><path d="M452.6,669 L457,673.4 M457,669 L452.6,673.4" stroke="#e00000" stroke-width="1.4"/><circle cx="454.8" cy="671.2" r="3.1" fill="none" stroke="#e00000" stroke-width="0.9"/>
<polyline points="561.5,671.7 558.2,671.7" fill="none" stroke="#0bd80b" stroke-width="1.3" /><path d="M555.7,669 V674.4 M558.2,669 V674.4" stroke="#0bd80b" stroke-width="1.1"/>
<rect x="561.5" y="657.3" width="107" height="67.7" fill="none" stroke="#0bd80b" stroke-width="1.5"/><polyline points="561.5,657.3 614.7,645 668.5,657.3" fill="none" stroke="#0bd80b" stroke-width="1.2" /><text x="615.00" y="689.65" font-size="10.2" fill="#dcdcdc" text-anchor="middle" textLength="41.50" lengthAdjust="spacingAndGlyphs">TK−1003</text><path d="M592.7,692.35 H637.3" stroke="#cfcfcf" stroke-width="1.15"/>
<polyline points="668.5,670 677.5,670" fill="none" stroke="#0bd80b" stroke-width="1.3" />
<circle cx="710.3" cy="648.8" r="9.75" fill="none" stroke="#f00000" stroke-width="1.45"/><rect x="702.8" y="642.5" width="15" height="5.9" fill="#f00000" fill-opacity="0.86" stroke="#f00000" stroke-width="0.6"/><rect x="702.9" y="649.3" width="14.8" height="5.6" fill="#f00000" fill-opacity="0.86" stroke="#f00000" stroke-width="0.6"/><text x="710.30" y="647.20" font-size="5.4" fill="#1c222a" text-anchor="middle" textLength="11.60" lengthAdjust="spacingAndGlyphs" font-weight="bold" fill-opacity="0.9">LAH</text><text x="710.30" y="653.90" font-size="5.4" fill="#1c222a" text-anchor="middle" textLength="11.20" lengthAdjust="spacingAndGlyphs" font-weight="bold" fill-opacity="0.9">1002</text>
<circle cx="734.4" cy="648.8" r="9.75" fill="none" stroke="#f00000" stroke-width="1.45"/><rect x="726.9" y="642.5" width="15" height="5.9" fill="#f00000" fill-opacity="0.86" stroke="#f00000" stroke-width="0.6"/><rect x="727" y="649.3" width="14.8" height="5.6" fill="#f00000" fill-opacity="0.86" stroke="#f00000" stroke-width="0.6"/><text x="734.40" y="647.20" font-size="5.4" fill="#1c222a" text-anchor="middle" textLength="11.60" lengthAdjust="spacingAndGlyphs" font-weight="bold" fill-opacity="0.9">LIC</text><text x="734.40" y="653.90" font-size="5.4" fill="#1c222a" text-anchor="middle" textLength="11.20" lengthAdjust="spacingAndGlyphs" font-weight="bold" fill-opacity="0.9">1002</text>
<circle cx="687.5" cy="669.8" r="9.75" fill="none" stroke="#f00000" stroke-width="1.45"/><rect x="682.4" y="663.5" width="10.2" height="5.9" fill="#f00000" fill-opacity="0.86" stroke="#f00000" stroke-width="0.6"/><rect x="680.1" y="670.3" width="14.8" height="5.6" fill="#f00000" fill-opacity="0.86" stroke="#f00000" stroke-width="0.6"/><text x="687.50" y="668.20" font-size="5.4" fill="#1c222a" text-anchor="middle" textLength="6.80" lengthAdjust="spacingAndGlyphs" font-weight="bold" fill-opacity="0.9">LT</text><text x="687.50" y="674.90" font-size="5.4" fill="#1c222a" text-anchor="middle" textLength="11.20" lengthAdjust="spacingAndGlyphs" font-weight="bold" fill-opacity="0.9">1002</text>
<circle cx="710.3" cy="669.8" r="9.75" fill="none" stroke="#f00000" stroke-width="1.45"/><rect x="702.8" y="663.5" width="15" height="5.9" fill="#f00000" fill-opacity="0.86" stroke="#f00000" stroke-width="0.6"/><rect x="702.9" y="670.3" width="14.8" height="5.6" fill="#f00000" fill-opacity="0.86" stroke="#f00000" stroke-width="0.6"/><text x="710.30" y="668.20" font-size="5.4" fill="#1c222a" text-anchor="middle" textLength="11.60" lengthAdjust="spacingAndGlyphs" font-weight="bold" fill-opacity="0.9">LAL</text><text x="710.30" y="674.90" font-size="5.4" fill="#1c222a" text-anchor="middle" textLength="11.20" lengthAdjust="spacingAndGlyphs" font-weight="bold" fill-opacity="0.9">1002</text>
<circle cx="734.6" cy="679.4" r="9.75" fill="none" stroke="#f00000" stroke-width="1.45"/><rect x="729.5" y="673.1" width="10.2" height="5.9" fill="#f00000" fill-opacity="0.86" stroke="#f00000" stroke-width="0.6"/><rect x="727.2" y="679.9" width="14.8" height="5.6" fill="#f00000" fill-opacity="0.86" stroke="#f00000" stroke-width="0.6"/><text x="734.60" y="677.80" font-size="5.4" fill="#1c222a" text-anchor="middle" textLength="6.80" lengthAdjust="spacingAndGlyphs" font-weight="bold" fill-opacity="0.9">CV</text><text x="734.60" y="684.50" font-size="5.4" fill="#1c222a" text-anchor="middle" textLength="11.20" lengthAdjust="spacingAndGlyphs" font-weight="bold" fill-opacity="0.9">1002</text>
<polyline points="734.5,659 734.5,669.2" fill="none" stroke="#f00000" stroke-width="1.25" />
<polyline points="668.5,710.4 672.8,710.4" fill="none" stroke="#0bd80b" stroke-width="1.3" /><path d="M675.3,707.7 V713.1 M672.8,707.7 V713.1" stroke="#0bd80b" stroke-width="1.1"/>
<polyline points="676,710.4 755,710.4" fill="none" stroke="#0505ff" stroke-width="1.4" />
<polyline points="680.6,710.4 680.6,748.5 741,748.5" fill="none" stroke="#0505ff" stroke-width="1.4" />
<polyline points="747.9,748.5 747.9,717" fill="none" stroke="#0505ff" stroke-width="1.4" />
<polygon points="762.6,710.4 754.6,708.05 754.6,712.75" fill="#f4f4f4"/>
<polygon points="680.6,748.8 678.25,740.8 682.95,740.8" fill="#f4f4f4"/>
<polygon points="747.9,748.5 739.9,746.15 739.9,750.85" fill="#f4f4f4"/>
<polygon points="747.9,710.6 745.55,718.6 750.25,718.6" fill="#f4f4f4"/>
<polygon points="683.2,707.7 693.6,713.1 693.6,707.7 683.2,713.1" fill="#212830" stroke="#f4f4f4" stroke-width="0.9" stroke-linejoin="miter"/>
<path d="M697,707.8 L701,707.8 L703,709.4 L703,711.4 L701,713 L697,713 Z" fill="#212830" stroke="#f4f4f4" stroke-width="0.9"/>
<polyline points="711.6,697 711.6,710.4" fill="none" stroke="#f00000" stroke-width="1.25" /><polyline points="728.9,687.6 711.6,710.4" fill="none" stroke="#f00000" stroke-width="1.25" />
<polygon points="706.4,707.7 716.8,713.1 716.8,707.7 706.4,713.1" fill="#ff0000" stroke="#ff0000" stroke-width="0.5"/><rect x="710.3" y="709.45" width="2.6" height="1.9" fill="#ff0000"/>
<circle cx="711.6" cy="691.9" r="5.1" fill="none" stroke="#f00000" stroke-width="1.25"/><text x="711.60" y="693.70" font-size="4.8" fill="#ff1414" text-anchor="middle" textLength="7.60" lengthAdjust="spacingAndGlyphs" font-weight="bold">E/H</text>
<path d="M726.8,707.8 L722.8,707.8 L720.8,709.4 L720.8,711.4 L722.8,713 L726.8,713 Z" fill="#212830" stroke="#f4f4f4" stroke-width="0.9"/>
<polygon points="731.3,707.7 741.7,713.1 741.7,707.7 731.3,713.1" fill="#212830" stroke="#f4f4f4" stroke-width="0.9" stroke-linejoin="miter"/>
<polygon points="705.2,745.8 715.6,751.2 715.6,745.8 705.2,751.2" fill="#f4f4f4" stroke="#f4f4f4" stroke-width="0.5"/><rect x="709.1" y="747.55" width="2.6" height="1.9" fill="#f4f4f4"/>
<text x="699.90" y="703.18" font-size="6.6" fill="#e6e6e6" text-anchor="middle" textLength="16.00" lengthAdjust="spacingAndGlyphs" stroke="#e6e6e6" stroke-width="0.28">4"x3"</text>
<text x="724.60" y="703.18" font-size="6.6" fill="#e6e6e6" text-anchor="middle" textLength="15.40" lengthAdjust="spacingAndGlyphs" stroke="#e6e6e6" stroke-width="0.28">3"x4"</text>
<text x="713.20" y="722.32" font-size="7.0" fill="#e6e6e6" text-anchor="middle" textLength="57.80" lengthAdjust="spacingAndGlyphs" stroke="#e6e6e6" stroke-width="0.28">4"−CS300−P−1039</text>
<text x="710.90" y="740.18" font-size="6.6" fill="#e6e6e6" text-anchor="middle" textLength="4.60" lengthAdjust="spacingAndGlyphs" stroke="#e6e6e6" stroke-width="0.28">3"</text>
<text x="710.60" y="760.16" font-size="7.4" fill="#e6e6e6" text-anchor="middle" textLength="23.00" lengthAdjust="spacingAndGlyphs" stroke="#e6e6e6" stroke-width="0.28">HA−161</text>
<polygon points="762.6,802.6 760.25,794.6 764.95,794.6" fill="#f4f4f4"/>
<polyline points="762.6,715.4 881,715.4" fill="none" stroke="#0505ff" stroke-width="1.4" />
<polygon points="888.6,715.4 880.6,713.05 880.6,717.75" fill="#f4f4f4"/>
<polyline points="888.6,715.4 888.6,730" fill="none" stroke="#0505ff" stroke-width="1.4" />
<polyline points="888.6,738.9 888.6,795" fill="none" stroke="#0505ff" stroke-width="1.4" />
<polygon points="888.6,802.6 886.25,794.6 890.95,794.6" fill="#f4f4f4"/>
<text x="801.00" y="710.62" font-size="7.0" fill="#e6e6e6" text-anchor="middle" textLength="58.20" lengthAdjust="spacingAndGlyphs" stroke="#e6e6e6" stroke-width="0.28">4"−CS300−P−1040</text>
<polyline points="762.6,802.4 813.5,802.4" fill="none" stroke="#0505ff" stroke-width="1.4" />
<polygon points="820.8,802.4 812.8,800.05 812.8,804.75" fill="#f4f4f4"/>
<polyline points="888.6,802.4 930,802.4" fill="none" stroke="#0505ff" stroke-width="1.4" />
<polygon points="937.2,802.4 929.2,800.05 929.2,804.75" fill="#f4f4f4"/>
<polygon points="786.5,799.7 796.9,805.1 796.9,799.7 786.5,805.1" fill="#212830" stroke="#f4f4f4" stroke-width="0.9" stroke-linejoin="miter"/>
<polygon points="907.3,799.7 917.7,805.1 917.7,799.7 907.3,805.1" fill="#212830" stroke="#f4f4f4" stroke-width="0.9" stroke-linejoin="miter"/>
<text x="791.60" y="793.98" font-size="6.6" fill="#e6e6e6" text-anchor="middle" textLength="5.60" lengthAdjust="spacingAndGlyphs" stroke="#e6e6e6" stroke-width="0.28">4"</text>
<text x="912.20" y="793.98" font-size="6.6" fill="#e6e6e6" text-anchor="middle" textLength="5.60" lengthAdjust="spacingAndGlyphs" stroke="#e6e6e6" stroke-width="0.28">4"</text>
<text x="791.40" y="814.16" font-size="7.4" fill="#e6e6e6" text-anchor="middle" textLength="23.20" lengthAdjust="spacingAndGlyphs" stroke="#e6e6e6" stroke-width="0.28">HA−103</text>
<text x="912.30" y="814.16" font-size="7.4" fill="#e6e6e6" text-anchor="middle" textLength="23.20" lengthAdjust="spacingAndGlyphs" stroke="#e6e6e6" stroke-width="0.28">HA−107</text>
<polyline points="832.8,742 832.8,783" fill="none" stroke="#0505ff" stroke-width="1.4" />
<polyline points="832.8,734.5 941,734.5" fill="none" stroke="#0505ff" stroke-width="1.4" />
<polygon points="832.8,734.5 830.45,742.5 835.15,742.5" fill="#f4f4f4"/>
<polygon points="948.9,734.5 940.9,732.15 940.9,736.85" fill="#f4f4f4"/>
<polygon points="830.1,744.4 835.5,754.8 830.1,754.8 835.5,744.4" fill="#212830" stroke="#f4f4f4" stroke-width="0.9" stroke-linejoin="miter"/>
<path d="M830,767.9 H835.6 L830,779.1 H835.6" fill="none" stroke="#f4f4f4" stroke-width="0.9"/>
<path d="M825.3,790.7 C825.3,787.4 829,786.4 833,786.4 C837,786.4 840.7,787.4 840.7,790.7 V812.4 L836.2,816.8 H829.8 L825.3,812.4 Z" fill="none" stroke="#0bd80b" stroke-width="1.3"/><path d="M833,786.4 V783 M830.8,783.2 H835.2" stroke="#0bd80b" stroke-width="1.1" fill="none"/><path d="M825.3,802.4 H820.8 M821.1,800 V804.8" stroke="#0bd80b" stroke-width="1.1" fill="none"/><polyline points="840.7,802.4 848.4,802.4" fill="none" stroke="#0bd80b" stroke-width="1.2" /><rect x="848.4" y="797.3" width="20.8" height="10.2" rx="2.2" fill="none" stroke="#0bd80b" stroke-width="1.3"/><path d="M866.8,797.8 Q865.6,802.4 866.8,807" stroke="#0bd80b" stroke-width="0.9" fill="none"/>
<text x="844.90" y="732.32" font-size="7.0" fill="#e6e6e6" text-anchor="middle" textLength="58.00" lengthAdjust="spacingAndGlyphs" stroke="#e6e6e6" stroke-width="0.28">3"−CS300−P−1043</text>
<text x="0" y="2.38" font-size="6.6" fill="#e6e6e6" text-anchor="middle" textLength="4.6" lengthAdjust="spacingAndGlyphs" stroke="#e6e6e6" stroke-width="0.28" transform="translate(822.2 749.6) rotate(-90)">3"</text>
<text x="0" y="2.38" font-size="6.6" fill="#e6e6e6" text-anchor="middle" textLength="4.6" lengthAdjust="spacingAndGlyphs" stroke="#e6e6e6" stroke-width="0.28" transform="translate(822 773.5) rotate(-90)">3"</text>
<text x="0" y="2.2" font-size="6.1" fill="#e6e6e6" text-anchor="middle" textLength="47.2" lengthAdjust="spacingAndGlyphs" stroke="#e6e6e6" stroke-width="0.28" transform="translate(842.2 761) rotate(-90)">CK−101HA−116</text>
<polyline points="948.9,589 948.9,783" fill="none" stroke="#0505ff" stroke-width="1.4" />
<polygon points="946.2,744.4 951.6,754.8 946.2,754.8 951.6,744.4" fill="#212830" stroke="#f4f4f4" stroke-width="0.9" stroke-linejoin="miter"/>
<path d="M946.1,767.9 H951.7 L946.1,779.1 H951.7" fill="none" stroke="#f4f4f4" stroke-width="0.9"/>
<path d="M941.3,790.7 C941.3,787.4 945,786.4 949,786.4 C953,786.4 956.7,787.4 956.7,790.7 V812.4 L952.2,816.8 H945.8 L941.3,812.4 Z" fill="none" stroke="#0bd80b" stroke-width="1.3"/><path d="M949,786.4 V783 M946.8,783.2 H951.2" stroke="#0bd80b" stroke-width="1.1" fill="none"/><path d="M941.3,802.4 H937.2 M937.5,800 V804.8" stroke="#0bd80b" stroke-width="1.1" fill="none"/><polyline points="956.7,802.4 964.4,802.4" fill="none" stroke="#0bd80b" stroke-width="1.2" /><rect x="964.4" y="797.3" width="20.8" height="10.2" rx="2.2" fill="none" stroke="#0bd80b" stroke-width="1.3"/><path d="M982.8,797.8 Q981.6,802.4 982.8,807" stroke="#0bd80b" stroke-width="0.9" fill="none"/>
<text x="0" y="2.38" font-size="6.6" fill="#e6e6e6" text-anchor="middle" textLength="4.6" lengthAdjust="spacingAndGlyphs" stroke="#e6e6e6" stroke-width="0.28" transform="translate(938.2 749.6) rotate(-90)">3"</text>
<text x="0" y="2.38" font-size="6.6" fill="#e6e6e6" text-anchor="middle" textLength="4.6" lengthAdjust="spacingAndGlyphs" stroke="#e6e6e6" stroke-width="0.28" transform="translate(938 773.5) rotate(-90)">3"</text>
<text x="0" y="2.2" font-size="6.1" fill="#e6e6e6" text-anchor="middle" textLength="47.2" lengthAdjust="spacingAndGlyphs" stroke="#e6e6e6" stroke-width="0.28" transform="translate(958.2 761) rotate(-90)">CK−102HA−151</text>
<polyline points="948.9,720.1 977.5,720.1" fill="none" stroke="#0505ff" stroke-width="1.4" />
<polygon points="984.9,720.1 976.9,717.75 976.9,722.45" fill="#f4f4f4"/>
<polyline points="984.9,720.1 984.9,621" fill="none" stroke="#0505ff" stroke-width="1.4" />
<text x="832.30" y="844.30" font-size="10.2" fill="#dcdcdc" text-anchor="middle" textLength="36.60" lengthAdjust="spacingAndGlyphs">P−1003</text>
<path d="M813.3,847.2 H851.3" stroke="#cfcfcf" stroke-width="1.15"/>
<text x="948.40" y="844.30" font-size="10.2" fill="#dcdcdc" text-anchor="middle" textLength="36.60" lengthAdjust="spacingAndGlyphs">P−1004</text>
<path d="M929.4,847.2 H967.4" stroke="#cfcfcf" stroke-width="1.15"/>
<text x="0" y="2.52" font-size="7.0" fill="#e6e6e6" text-anchor="middle" textLength="57.6" lengthAdjust="spacingAndGlyphs" stroke="#e6e6e6" stroke-width="0.28" transform="translate(943.8 620.6) rotate(-90)">3"−CS300−P−1042</text>
<text x="0" y="2.52" font-size="7.0" fill="#e6e6e6" text-anchor="middle" textLength="57.2" lengthAdjust="spacingAndGlyphs" stroke="#e6e6e6" stroke-width="0.28" transform="translate(977.6 679) rotate(-90)">3"−CS300−P−1044</text>
<polyline points="938.8,442.1 1060,442.1" fill="none" stroke="#0bd80b" stroke-width="1.3" />
<path d="M936.3,436.9 V446 M938.9,436.9 V446 M1059.5,436.9 V446 M1062.2,436.9 V446" stroke="#0bd80b" stroke-width="1.1"/>
<path d="M948.5,437.6 V442 M970.3,437.6 V442 M946.3,437.8 H950.7 M968.1,437.8 H972.5 M960.3,442 V444 M1038,442 V444" stroke="#0bd80b" stroke-width="1" fill="none"/>
<polyline points="973.8,609 1096.3,609" fill="none" stroke="#0bd80b" stroke-width="1.4" />
<path d="M972.4,586 V613.8 M975,586 V613.8 M1095.6,586 V613.8 M1098.2,586 V613.8" stroke="#0bd80b" stroke-width="1.1"/>
<path d="M996.9,586 V609 M1074.1,586 V609" stroke="#0bd80b" stroke-width="1.1" stroke-dasharray="4.4 1.6 1.4 1.6"/>
<path d="M984.8,609 V613.4 M1064.4,609 V613.4 M982.4,613.4 H987.2 M1062,613.4 H1066.8" stroke="#0bd80b" stroke-width="1" fill="none"/>
<text x="1035.60" y="600.30" font-size="10.2" fill="#dcdcdc" text-anchor="middle" textLength="35.60" lengthAdjust="spacingAndGlyphs">E−1001</text>
<path d="M1017.5,603.1 H1053.8" stroke="#cfcfcf" stroke-width="1.15"/>
<polygon points="984.8,613.5 982.45,621.5 987.15,621.5" fill="#f4f4f4"/>
<polygon points="1064.4,613.5 1062.05,621.5 1066.75,621.5" fill="#f4f4f4"/>
<polygon points="982.1,625.4 987.5,635.8 982.1,635.8 987.5,625.4" fill="#212830" stroke="#f4f4f4" stroke-width="0.9" stroke-linejoin="miter"/>
<text x="0" y="2.38" font-size="6.6" fill="#e6e6e6" text-anchor="middle" textLength="4.6" lengthAdjust="spacingAndGlyphs" stroke="#e6e6e6" stroke-width="0.28" transform="translate(974.4 630.6) rotate(-90)">3"</text>
<text x="0" y="2.45" font-size="6.8" fill="#e6e6e6" text-anchor="middle" textLength="23.2" lengthAdjust="spacingAndGlyphs" stroke="#e6e6e6" stroke-width="0.28" transform="translate(994.2 630.6) rotate(-90)">HA−155</text>
<polyline points="1064.4,621 1064.4,631.6" fill="none" stroke="#0505ff" stroke-width="1.4" />
<polyline points="1072,631.6 1402.2,631.6" fill="none" stroke="#0505ff" stroke-width="1.4" />
<polygon points="1064.4,631.6 1072.4,629.25 1072.4,633.95" fill="#f4f4f4"/>
<text x="1134.30" y="628.52" font-size="7.0" fill="#e6e6e6" text-anchor="middle" textLength="58.40" lengthAdjust="spacingAndGlyphs" stroke="#e6e6e6" stroke-width="0.28">4"−CS300−P−1053</text>
<rect x="1210" y="628" width="4.6" height="7.4" fill="none" stroke="#f00000" stroke-width="1"/><path d="M1212.3,628 V635.4" stroke="#f00000" stroke-width="0.8"/>
<polyline points="1212,635.4 1212,647" fill="none" stroke="#f00000" stroke-width="1.25" />
<circle cx="1211.9" cy="657.1" r="9.75" fill="none" stroke="#f00000" stroke-width="1.45"/><rect x="1206.8" y="650.8" width="10.2" height="5.9" fill="#f00000" fill-opacity="0.86" stroke="#f00000" stroke-width="0.6"/><rect x="1204.5" y="657.6" width="14.8" height="5.6" fill="#f00000" fill-opacity="0.86" stroke="#f00000" stroke-width="0.6"/><text x="1211.90" y="655.50" font-size="5.4" fill="#1c222a" text-anchor="middle" textLength="6.80" lengthAdjust="spacingAndGlyphs" font-weight="bold" fill-opacity="0.9">FE</text><text x="1211.90" y="662.20" font-size="5.4" fill="#1c222a" text-anchor="middle" textLength="11.20" lengthAdjust="spacingAndGlyphs" font-weight="bold" fill-opacity="0.9">1004</text>
<polygon points="1402.2,631.6 1406.2,627.6 1467.9,627.6 1467.9,635.6 1406.2,635.6" fill="#212830" stroke="#f4f4f4" stroke-width="1.5" stroke-linejoin="miter"/><polygon points="1402.2,631.6 1406.2,627.6 1467.9,627.6 1467.9,635.6 1406.2,635.6" fill="none" stroke="#8a8f96" stroke-width="0.4"/><path d="M1446.4,627.6 V635.6 M1406.2,627.6 V635.6" stroke="#f4f4f4" stroke-width="1.1"/><text x="1426.30" y="634.00" font-size="6.4" fill="#ffffff" text-anchor="middle" textLength="33.70" lengthAdjust="spacingAndGlyphs" font-weight="bold">1-A1-1002</text><rect x="1456.55" y="632.8" width="1.2" height="1.2" fill="#e6e6e6"/><text x="1463.50" y="625.40" font-size="5.6" fill="#e6e6e6" textLength="3.60" lengthAdjust="spacingAndGlyphs">P</text><rect x="1466.1" y="639.8" width="1" height="1" fill="#e6e6e6"/>
<circle cx="1471.7" cy="631.2" r="3.1" fill="#00a650"/><path d="M1469.7,629.2 L1473.7,633.2" stroke="#1b2a22" stroke-width="1.1"/>
<polyline points="948.5,437.5 948.5,382 948.5,374.4 1397.5,374.4" fill="none" stroke="#0505ff" stroke-width="1.4" />
<polygon points="948.5,374.4 946.15,382.4 950.85,382.4" fill="#f4f4f4"/>
<polygon points="1405,374.4 1397,372.05 1397,376.75" fill="#f4f4f4"/>
<text x="1033.40" y="372.12" font-size="7.0" fill="#e6e6e6" text-anchor="middle" textLength="57.40" lengthAdjust="spacingAndGlyphs" stroke="#e6e6e6" stroke-width="0.28">3"−CS300−P−1045</text>
<polygon points="1405.1,370.4 1466.7,370.4 1470.6,374.4 1466.7,378.4 1405.1,378.4" fill="#212830" stroke="#f4f4f4" stroke-width="1.5" stroke-linejoin="miter"/><polygon points="1405.1,370.4 1466.7,370.4 1470.6,374.4 1466.7,378.4 1405.1,378.4" fill="none" stroke="#8a8f96" stroke-width="0.4"/><path d="M1426.3,370.4 V378.4 M1466.7,370.4 V378.4" stroke="#f4f4f4" stroke-width="1.1"/><text x="1415.70" y="376.80" font-size="6.4" fill="#ffffff" text-anchor="middle" textLength="10.50" lengthAdjust="spacingAndGlyphs" font-weight="bold">102</text><text x="1446.50" y="376.80" font-size="6.4" fill="#ffffff" text-anchor="middle" textLength="33.90" lengthAdjust="spacingAndGlyphs" font-weight="bold">1-A1-1002</text><text x="1405.50" y="368.20" font-size="5.6" fill="#e6e6e6" textLength="3.60" lengthAdjust="spacingAndGlyphs">P</text><rect x="1405.7" y="382" width="1" height="1" fill="#e6e6e6"/>
<circle cx="1475" cy="374.4" r="3.1" fill="#00a650"/><path d="M1473,372.4 L1477,376.4" stroke="#1b2a22" stroke-width="1.1"/>
<polyline points="970.3,437.5 970.3,410.3 1397.5,410.3" fill="none" stroke="#0505ff" stroke-width="1.4" />
<polygon points="970.3,410.3 967.95,418.3 972.65,418.3" fill="#f4f4f4"/>
<polygon points="1405,410.3 1397,407.95 1397,412.65" fill="#f4f4f4"/>
<text x="1093.30" y="408.92" font-size="7.0" fill="#e6e6e6" text-anchor="middle" textLength="57.40" lengthAdjust="spacingAndGlyphs" stroke="#e6e6e6" stroke-width="0.28">4"−CS300−P−1046</text>
<polygon points="1405.1,406.3 1466.7,406.3 1470.6,410.3 1466.7,414.3 1405.1,414.3" fill="#212830" stroke="#f4f4f4" stroke-width="1.5" stroke-linejoin="miter"/><polygon points="1405.1,406.3 1466.7,406.3 1470.6,410.3 1466.7,414.3 1405.1,414.3" fill="none" stroke="#8a8f96" stroke-width="0.4"/><path d="M1426.3,406.3 V414.3 M1466.7,406.3 V414.3" stroke="#f4f4f4" stroke-width="1.1"/><rect x="1415.1" y="411.5" width="1.2" height="1.2" fill="#e6e6e6"/><text x="1446.50" y="412.70" font-size="6.4" fill="#ffffff" text-anchor="middle" textLength="33.90" lengthAdjust="spacingAndGlyphs" font-weight="bold">1-A1-1002</text><text x="1405.50" y="404.10" font-size="5.6" fill="#e6e6e6" textLength="3.60" lengthAdjust="spacingAndGlyphs">P</text><rect x="1405.7" y="417.9" width="1" height="1" fill="#e6e6e6"/>
<circle cx="1475" cy="410.4" r="3.1" fill="#00a650"/><path d="M1473,408.4 L1477,412.4" stroke="#1b2a22" stroke-width="1.1"/><path d="M1476.4,407 l2.6,-0.6 l-0.2,2.4 z" fill="#ffe000"/>
<polyline points="1146.3,410.3 1146.3,447.5 1266,447.5" fill="none" stroke="#0505ff" stroke-width="1.4" />
<polyline points="1273.8,447.5 1273.8,417.5" fill="none" stroke="#0505ff" stroke-width="1.4" />
<polygon points="1146.3,447.8 1143.95,439.8 1148.65,439.8" fill="#f4f4f4"/>
<polygon points="1273.8,447.5 1265.8,445.15 1265.8,449.85" fill="#f4f4f4"/>
<polygon points="1273.8,410.3 1271.45,418.3 1276.15,418.3" fill="#f4f4f4"/>
<polygon points="1171.3,407.6 1181.7,413 1181.7,407.6 1171.3,413" fill="#212830" stroke="#f4f4f4" stroke-width="0.9" stroke-linejoin="miter"/>
<polygon points="1230.2,407.6 1240.6,413 1240.6,407.6 1230.2,413" fill="#212830" stroke="#f4f4f4" stroke-width="0.9" stroke-linejoin="miter"/>
<polyline points="1203.4,396.6 1203.4,410.3" fill="none" stroke="#f00000" stroke-width="1.25" /><polyline points="1220.4,394.4 1203.4,410.3" fill="none" stroke="#f00000" stroke-width="1.25" />
<polygon points="1198.2,407.6 1208.6,413 1208.6,407.6 1198.2,413" fill="#ff0000" stroke="#ff0000" stroke-width="0.5"/><rect x="1202.1" y="409.35" width="2.6" height="1.9" fill="#ff0000"/>
<circle cx="1203.4" cy="391.5" r="5.1" fill="none" stroke="#f00000" stroke-width="1.25"/><text x="1203.40" y="393.30" font-size="4.8" fill="#ff1414" text-anchor="middle" textLength="7.60" lengthAdjust="spacingAndGlyphs" font-weight="bold">E/H</text>
<circle cx="1227.8" cy="387.3" r="9.75" fill="none" stroke="#f00000" stroke-width="1.45"/><rect x="1222.7" y="381" width="10.2" height="5.9" fill="#f00000" fill-opacity="0.86" stroke="#f00000" stroke-width="0.6"/><rect x="1220.4" y="387.8" width="14.8" height="5.6" fill="#f00000" fill-opacity="0.86" stroke="#f00000" stroke-width="0.6"/><text x="1227.80" y="385.70" font-size="5.4" fill="#1c222a" text-anchor="middle" textLength="6.80" lengthAdjust="spacingAndGlyphs" font-weight="bold" fill-opacity="0.9">CV</text><text x="1227.80" y="392.40" font-size="5.4" fill="#1c222a" text-anchor="middle" textLength="11.20" lengthAdjust="spacingAndGlyphs" font-weight="bold" fill-opacity="0.9">1003</text>
<rect x="1239.5" y="377.7" width="20.2" height="20.2" fill="none" stroke="#f00000" stroke-width="1.1"/><circle cx="1249.6" cy="387.8" r="9.75" fill="none" stroke="#f00000" stroke-width="1.45"/><rect x="1242.1" y="381.5" width="15" height="5.9" fill="#f00000" fill-opacity="0.86" stroke="#f00000" stroke-width="0.6"/><rect x="1242.2" y="388.3" width="14.8" height="5.6" fill="#f00000" fill-opacity="0.86" stroke="#f00000" stroke-width="0.6"/><text x="1249.60" y="386.20" font-size="5.4" fill="#1c222a" text-anchor="middle" textLength="11.60" lengthAdjust="spacingAndGlyphs" font-weight="bold" fill-opacity="0.9">FIC</text><text x="1249.60" y="392.90" font-size="5.4" fill="#1c222a" text-anchor="middle" textLength="11.20" lengthAdjust="spacingAndGlyphs" font-weight="bold" fill-opacity="0.9">1003</text>
<polygon points="1198.8,444.8 1209.2,450.2 1209.2,444.8 1198.8,450.2" fill="#f4f4f4" stroke="#f4f4f4" stroke-width="0.5"/><rect x="1202.7" y="446.55" width="2.6" height="1.9" fill="#f4f4f4"/>
<text x="1176.60" y="401.98" font-size="6.6" fill="#e6e6e6" text-anchor="middle" textLength="5.60" lengthAdjust="spacingAndGlyphs" stroke="#e6e6e6" stroke-width="0.28">4"</text>
<text x="1235.20" y="401.98" font-size="6.6" fill="#e6e6e6" text-anchor="middle" textLength="5.60" lengthAdjust="spacingAndGlyphs" stroke="#e6e6e6" stroke-width="0.28">4"</text>
<text x="1204.00" y="439.78" font-size="6.6" fill="#e6e6e6" text-anchor="middle" textLength="5.60" lengthAdjust="spacingAndGlyphs" stroke="#e6e6e6" stroke-width="0.28">4"</text>
<text x="1176.50" y="422.26" font-size="7.4" fill="#e6e6e6" text-anchor="middle" textLength="23.20" lengthAdjust="spacingAndGlyphs" stroke="#e6e6e6" stroke-width="0.28">HA−169</text>
<text x="1235.40" y="422.26" font-size="7.4" fill="#e6e6e6" text-anchor="middle" textLength="23.20" lengthAdjust="spacingAndGlyphs" stroke="#e6e6e6" stroke-width="0.28">HA−167</text>
<text x="1203.80" y="459.66" font-size="7.4" fill="#e6e6e6" text-anchor="middle" textLength="23.20" lengthAdjust="spacingAndGlyphs" stroke="#e6e6e6" stroke-width="0.28">HA−170</text>
<polyline points="1135,487.8 1400,487.8" fill="none" stroke="#0505ff" stroke-width="1.4" />
<text x="1143.00" y="485.52" font-size="7.0" fill="#e6e6e6" text-anchor="middle" textLength="16.00" lengthAdjust="spacingAndGlyphs" stroke="#e6e6e6" stroke-width="0.28">−1052</text>
<path d="M1205.3,484.4 V491.5 M1208.7,484.4 V491.5" stroke="#f00000" stroke-width="1.1"/><rect x="1205.3" y="486" width="3.4" height="5" fill="#f00000" fill-opacity="0.5"/>
<polyline points="1219.6,480.6 1208.4,486.8" fill="none" stroke="#f00000" stroke-width="1.25" />
<circle cx="1227.6" cy="475" r="9.75" fill="none" stroke="#f00000" stroke-width="1.45"/><rect x="1222.5" y="468.7" width="10.2" height="5.9" fill="#f00000" fill-opacity="0.86" stroke="#f00000" stroke-width="0.6"/><rect x="1220.2" y="475.5" width="14.8" height="5.6" fill="#f00000" fill-opacity="0.86" stroke="#f00000" stroke-width="0.6"/><text x="1227.60" y="473.40" font-size="5.4" fill="#1c222a" text-anchor="middle" textLength="6.80" lengthAdjust="spacingAndGlyphs" font-weight="bold" fill-opacity="0.9">FE</text><text x="1227.60" y="480.10" font-size="5.4" fill="#1c222a" text-anchor="middle" textLength="11.20" lengthAdjust="spacingAndGlyphs" font-weight="bold" fill-opacity="0.9">1003</text>
<polygon points="1400,487.8 1403.2,483.8 1466,483.8 1466,491.8 1403.2,491.8" fill="#212830" stroke="#f4f4f4" stroke-width="1.5" stroke-linejoin="miter"/><polygon points="1400,487.8 1403.2,483.8 1466,483.8 1466,491.8 1403.2,491.8" fill="none" stroke="#8a8f96" stroke-width="0.4"/><path d="M1443.8,483.8 V491.8 M1403.2,483.8 V491.8" stroke="#f4f4f4" stroke-width="1.1"/><text x="1423.50" y="490.20" font-size="6.4" fill="#ffffff" text-anchor="middle" textLength="34.10" lengthAdjust="spacingAndGlyphs" font-weight="bold">1-A1-1002</text><rect x="1454.3" y="489" width="1.2" height="1.2" fill="#e6e6e6"/><text x="1461.60" y="481.60" font-size="5.6" fill="#e6e6e6" textLength="3.60" lengthAdjust="spacingAndGlyphs">P</text><rect x="1464.2" y="496" width="1" height="1" fill="#e6e6e6"/>
<circle cx="1470" cy="487.3" r="3.1" fill="#00a650"/><path d="M1468,485.3 L1472,489.3" stroke="#1b2a22" stroke-width="1.1"/>
<polyline points="1135,514.5 1394,514.5" fill="none" stroke="#0505ff" stroke-width="1.4" />
<polygon points="1401,514.5 1393,512.15 1393,516.85" fill="#f4f4f4"/>
<polygon points="1401,510.5 1463,510.5 1466.6,514.5 1463,518.5 1401,518.5" fill="#212830" stroke="#f4f4f4" stroke-width="1.5" stroke-linejoin="miter"/><polygon points="1401,510.5 1463,510.5 1466.6,514.5 1463,518.5 1401,518.5" fill="none" stroke="#8a8f96" stroke-width="0.4"/><path d="M1422.4,510.5 V518.5 M1463,510.5 V518.5" stroke="#f4f4f4" stroke-width="1.1"/><text x="1411.70" y="516.90" font-size="6.4" fill="#ffffff" text-anchor="middle" textLength="10.50" lengthAdjust="spacingAndGlyphs" font-weight="bold">101</text><text x="1442.70" y="516.90" font-size="6.4" fill="#ffffff" text-anchor="middle" textLength="34.10" lengthAdjust="spacingAndGlyphs" font-weight="bold">1-A1-1002</text><text x="1401.40" y="508.30" font-size="5.6" fill="#e6e6e6" textLength="3.60" lengthAdjust="spacingAndGlyphs">P</text><rect x="1401.6" y="522.1" width="1" height="1" fill="#e6e6e6"/>
<circle cx="1470.8" cy="514.2" r="3.1" fill="#00a650"/><path d="M1468.8,512.2 L1472.8,516.2" stroke="#1b2a22" stroke-width="1.1"/>
<polyline points="1135,550.3 1394.5,550.3" fill="none" stroke="#0505ff" stroke-width="1.4" />
<polygon points="1402,550.3 1394,547.95 1394,552.65" fill="#f4f4f4"/>
<polygon points="1402,546.3 1463.8,546.3 1467.9,550.3 1463.8,554.3 1402,554.3" fill="#212830" stroke="#f4f4f4" stroke-width="1.5" stroke-linejoin="miter"/><polygon points="1402,546.3 1463.8,546.3 1467.9,550.3 1463.8,554.3 1402,554.3" fill="none" stroke="#8a8f96" stroke-width="0.4"/><path d="M1423.3,546.3 V554.3 M1463.8,546.3 V554.3" stroke="#f4f4f4" stroke-width="1.1"/><rect x="1412.05" y="551.5" width="1.2" height="1.2" fill="#e6e6e6"/><text x="1443.55" y="552.70" font-size="6.4" fill="#ffffff" text-anchor="middle" textLength="34.00" lengthAdjust="spacingAndGlyphs" font-weight="bold">1-A1-1002</text><text x="1402.40" y="544.10" font-size="5.6" fill="#e6e6e6" textLength="3.60" lengthAdjust="spacingAndGlyphs">P</text><rect x="1402.6" y="557.9" width="1" height="1" fill="#e6e6e6"/>
<circle cx="1471.7" cy="550.2" r="3.1" fill="#00a650"/><path d="M1469.7,548.2 L1473.7,552.2" stroke="#1b2a22" stroke-width="1.1"/>
<text x="1147.00" y="549.02" font-size="7.0" fill="#e6e6e6" text-anchor="middle" textLength="24.00" lengthAdjust="spacingAndGlyphs" stroke="#e6e6e6" stroke-width="0.28">P−1049</text>
<polyline points="1182.5,550.3 1182.5,587.9 1302.5,587.9" fill="none" stroke="#0505ff" stroke-width="1.4" />
<polyline points="1309.8,587.9 1309.8,557.5" fill="none" stroke="#0505ff" stroke-width="1.4" />
<polygon points="1182.5,588.2 1180.15,580.2 1184.85,580.2" fill="#f4f4f4"/>
<polygon points="1309.8,587.9 1301.8,585.55 1301.8,590.25" fill="#f4f4f4"/>
<polygon points="1309.8,550.3 1307.45,558.3 1312.15,558.3" fill="#f4f4f4"/>
<polygon points="1207.3,547.6 1217.7,553 1217.7,547.6 1207.3,553" fill="#212830" stroke="#f4f4f4" stroke-width="0.9" stroke-linejoin="miter"/>
<polygon points="1266.3,547.6 1276.7,553 1276.7,547.6 1266.3,553" fill="#212830" stroke="#f4f4f4" stroke-width="0.9" stroke-linejoin="miter"/>
<polyline points="1239.6,537 1239.6,550.3" fill="none" stroke="#f00000" stroke-width="1.25" /><polyline points="1256.6,534.6 1239.6,550.3" fill="none" stroke="#f00000" stroke-width="1.25" />
<polygon points="1234.4,547.6 1244.8,553 1244.8,547.6 1234.4,553" fill="#ff0000" stroke="#ff0000" stroke-width="0.5"/><rect x="1238.3" y="549.35" width="2.6" height="1.9" fill="#ff0000"/>
<circle cx="1239.6" cy="531.9" r="5.1" fill="none" stroke="#f00000" stroke-width="1.25"/><text x="1239.60" y="533.70" font-size="4.8" fill="#ff1414" text-anchor="middle" textLength="7.60" lengthAdjust="spacingAndGlyphs" font-weight="bold">E/H</text>
<circle cx="1264" cy="527.5" r="9.75" fill="none" stroke="#f00000" stroke-width="1.45"/><rect x="1258.9" y="521.2" width="10.2" height="5.9" fill="#f00000" fill-opacity="0.86" stroke="#f00000" stroke-width="0.6"/><rect x="1256.6" y="528" width="14.8" height="5.6" fill="#f00000" fill-opacity="0.86" stroke="#f00000" stroke-width="0.6"/><text x="1264.00" y="525.90" font-size="5.4" fill="#1c222a" text-anchor="middle" textLength="6.80" lengthAdjust="spacingAndGlyphs" font-weight="bold" fill-opacity="0.9">CV</text><text x="1264.00" y="532.60" font-size="5.4" fill="#1c222a" text-anchor="middle" textLength="11.20" lengthAdjust="spacingAndGlyphs" font-weight="bold" fill-opacity="0.9">1004</text>
<rect x="1275.5" y="517.4" width="20.2" height="20.2" fill="none" stroke="#f00000" stroke-width="1.1"/><circle cx="1285.6" cy="527.5" r="9.75" fill="none" stroke="#f00000" stroke-width="1.45"/><rect x="1278.1" y="521.2" width="15" height="5.9" fill="#f00000" fill-opacity="0.86" stroke="#f00000" stroke-width="0.6"/><rect x="1278.2" y="528" width="14.8" height="5.6" fill="#f00000" fill-opacity="0.86" stroke="#f00000" stroke-width="0.6"/><text x="1285.60" y="525.90" font-size="5.4" fill="#1c222a" text-anchor="middle" textLength="11.60" lengthAdjust="spacingAndGlyphs" font-weight="bold" fill-opacity="0.9">FIC</text><text x="1285.60" y="532.60" font-size="5.4" fill="#1c222a" text-anchor="middle" textLength="11.20" lengthAdjust="spacingAndGlyphs" font-weight="bold" fill-opacity="0.9">1004</text>
<polygon points="1235.1,585.2 1245.5,590.6 1245.5,585.2 1235.1,590.6" fill="#f4f4f4" stroke="#f4f4f4" stroke-width="0.5"/><rect x="1239" y="586.95" width="2.6" height="1.9" fill="#f4f4f4"/>
<text x="1212.60" y="541.98" font-size="6.6" fill="#e6e6e6" text-anchor="middle" textLength="5.60" lengthAdjust="spacingAndGlyphs" stroke="#e6e6e6" stroke-width="0.28">4"</text>
<text x="1271.20" y="541.98" font-size="6.6" fill="#e6e6e6" text-anchor="middle" textLength="5.60" lengthAdjust="spacingAndGlyphs" stroke="#e6e6e6" stroke-width="0.28">4"</text>
<text x="1240.20" y="579.88" font-size="6.6" fill="#e6e6e6" text-anchor="middle" textLength="5.60" lengthAdjust="spacingAndGlyphs" stroke="#e6e6e6" stroke-width="0.28">4"</text>
<text x="1212.80" y="562.46" font-size="7.4" fill="#e6e6e6" text-anchor="middle" textLength="23.20" lengthAdjust="spacingAndGlyphs" stroke="#e6e6e6" stroke-width="0.28">HA−171</text>
<text x="1271.30" y="562.46" font-size="7.4" fill="#e6e6e6" text-anchor="middle" textLength="23.20" lengthAdjust="spacingAndGlyphs" stroke="#e6e6e6" stroke-width="0.28">HA−172</text>
<text x="1240.00" y="600.16" font-size="7.4" fill="#e6e6e6" text-anchor="middle" textLength="23.20" lengthAdjust="spacingAndGlyphs" stroke="#e6e6e6" stroke-width="0.28">HA−173</text>
</svg>
<div class="b" style="left:785px;top:444px;width:350px;height:145px;background:#424147;"></div>
<div class="b" style="left:788px;top:467px;width:344px;height:119px;background:#ffffff;"></div>
<span class="t" style="left:793.30px;top:449.50px;font-size:12.4px;line-height:12.4px;color:#ffffff;letter-spacing:-0.521px;">Please wait</span>
<span class="t" style="left:798.20px;top:491.84px;font-size:12px;line-height:12px;color:#111111;letter-spacing:-0.048px;">Export P&amp;ID properties.</span>
<div class="b" style="left:798px;top:536px;width:324px;height:21px;background:#e6e6e6;box-sizing:border-box;border:1px solid #bcbcbc;"></div>
<div class="b" style="left:798px;top:536.5px;width:139px;height:20px;background:#06b025;"></div>
</body></html>
